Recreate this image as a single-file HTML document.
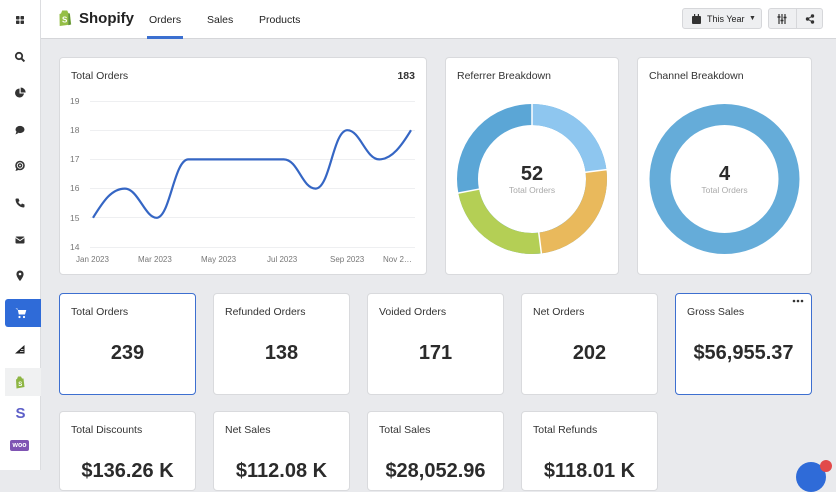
<!DOCTYPE html>
<html><head><meta charset="utf-8"><style>
*{margin:0;padding:0;box-sizing:border-box}
body{width:836px;height:470px;overflow:hidden;background:#e9eaed;font-family:"Liberation Sans",Arial,sans-serif;color:#333;position:relative}
.side{position:absolute;left:0;top:0;width:41px;height:470px;background:#fff;border-right:1px solid #dcdde0}
.top{position:absolute;left:41px;top:0;right:0;height:39px;background:#fff;border-bottom:1px solid #d5d6d9}
.ic{position:absolute;left:12px;width:16px;height:16px}
.card{position:absolute;background:#fff;border:1px solid #d9dadd;border-radius:4px}
.card.sel{border:1.5px solid #3d6fd0}
.lbl{position:absolute;left:11px;top:12px;font-size:10.5px;color:#333}
.val{position:absolute;left:0;right:0;top:48px;text-align:center;font-size:20px;font-weight:bold;color:#2b2b2b}
.t{position:absolute;font-size:10.5px}
.btn{position:absolute;top:8px;height:21px;background:#eeeff1;border:1px solid #d6d7da;border-radius:3px}
</style></head><body>
<div class="side">
 <svg class="ic" style="top:12px" viewBox="0 0 16 16"><rect x="4" y="4" width="3.5" height="3.5" rx=".7" fill="#333"/><rect x="8.5" y="4" width="3.5" height="3.5" rx=".7" fill="#333"/><rect x="4" y="8.5" width="3.5" height="3.5" rx=".7" fill="#333"/><rect x="8.5" y="8.5" width="3.5" height="3.5" rx=".7" fill="#333"/></svg>
 <svg class="ic" style="top:49px" viewBox="0 0 16 16"><circle cx="7" cy="7" r="3.2" fill="none" stroke="#333" stroke-width="1.8"/><path d="M9.4 9.4l3 3" stroke="#333" stroke-width="2"/></svg>
 <svg class="ic" style="top:85px" viewBox="0 0 16 16"><path d="M7.5 3.5a4.5 4.5 0 1 0 4.5 5H7.5z" fill="#333"/><path d="M8.7 2.5v5h5a5 5 0 0 0-5-5z" fill="#333"/></svg>
 <svg class="ic" style="top:122px" viewBox="0 0 16 16"><ellipse cx="8" cy="7.5" rx="4.5" ry="3.6" fill="#333"/><path d="M4.5 9.5l-1 3 3-1.5z" fill="#333"/></svg>
 <svg class="ic" style="top:158px" viewBox="0 0 16 16"><circle cx="8" cy="7.5" r="4" fill="none" stroke="#333" stroke-width="1.6"/><circle cx="8" cy="7.5" r="1.6" fill="none" stroke="#333" stroke-width="1.4"/><path d="M4.5 10l-1 3 3-1" fill="#333"/></svg>
 <svg class="ic" style="top:195px" viewBox="0 0 16 16"><path d="M4.5 3.5l2 0 1 2.5-1.3 1a6 6 0 0 0 2.8 2.8l1-1.3 2.5 1v2a1 1 0 0 1-1 1A8.5 8.5 0 0 1 3.5 4.5a1 1 0 0 1 1-1z" fill="#333"/></svg>
 <svg class="ic" style="top:232px" viewBox="0 0 16 16"><rect x="3.5" y="4.5" width="9" height="7" rx="1" fill="#333"/><path d="M3.5 5.5l4.5 3 4.5-3" stroke="#fff" stroke-width="1" fill="none"/></svg>
 <svg class="ic" style="top:268px" viewBox="0 0 16 16"><path d="M8 2.5a3.6 3.6 0 0 0-3.6 3.6c0 2.6 3.6 7 3.6 7s3.6-4.4 3.6-7A3.6 3.6 0 0 0 8 2.5z" fill="#333"/><circle cx="8" cy="6" r="1.3" fill="#fff"/></svg>
 <div style="position:absolute;left:5px;top:299px;width:36px;height:28px;background:#2f6bd8;border-radius:3px 0 0 3px"></div>
 <svg class="ic" style="top:305px;left:13px" viewBox="0 0 16 16"><path d="M2.5 3.5h2l1.3 6h6.2l1.3-4.5H5" fill="#fff"/><circle cx="6.5" cy="12" r="1.1" fill="#fff"/><circle cx="11" cy="12" r="1.1" fill="#fff"/></svg>
 <svg class="ic" style="top:341px" viewBox="0 0 16 16"><path d="M3 12.5L12.5 4v8.5z" fill="#222"/><path d="M8 10.5h3.5M9 8.5h2.5" stroke="#fff" stroke-width=".8"/></svg>
 <div style="position:absolute;left:5px;top:368px;width:36px;height:28px;background:#f0f1f2"></div>
 <svg class="ic" style="top:374px" viewBox="0 0 16 16"><path d="M4 5.5l1-.5 1-2.5h3l1 2 1.5 0 1 8.5-8 1.5z" fill="#8db543"/><text x="6.3" y="12" font-size="6" font-weight="bold" fill="#fff" font-family="Liberation Sans">S</text></svg>
 <div style="position:absolute;left:0;width:41px;top:405px;text-align:center;font-size:15px;font-weight:bold;color:#5d5fc8">S</div>
 <div style="position:absolute;left:10px;top:440px;width:19px;height:11px;background:#7f54b3;border-radius:2px;color:#fff;font-size:7px;font-weight:bold;text-align:center;line-height:11px">woo</div>
</div>
<div class="top">
 <svg style="position:absolute;left:17px;top:10px" width="14" height="16" viewBox="0 0 14 16"><path d="M1.5 4l1.5-.5 1.2-3h5l1.2 2.8 1.5.2 1.3 11-11.5 1.5z" fill="#95bf47"/><path d="M10.4 3.3l1.3.2 1.1 11-2.4.8z" fill="#5e8e3e"/><text x="4" y="12.5" font-size="8" font-weight="bold" fill="#fff" font-family="Liberation Sans">S</text></svg>
 <div class="t" style="left:38px;top:10px;font-size:15px;font-weight:bold;color:#222">Shopify</div>
 <div class="t" style="left:108px;top:14px;color:#222">Orders</div>
 <div style="position:absolute;left:106px;top:36px;width:36px;height:3px;background:#3b6fd0"></div>
 <div class="t" style="left:166px;top:14px;color:#222">Sales</div>
 <div class="t" style="left:218px;top:14px;color:#222">Products</div>
 <div class="btn" style="left:641px;width:80px"><svg style="position:absolute;left:9px;top:5px" width="9" height="10" viewBox="0 0 9 10"><rect x="0" y="2" width="9" height="8" rx="1" fill="#333"/><rect x="2" y="0" width="1.2" height="3" fill="#333"/><rect x="5.8" y="0" width="1.2" height="3" fill="#333"/></svg><span style="position:absolute;left:24px;top:5px;font-size:9px;color:#222">This Year</span><span style="position:absolute;left:66px;top:6px;font-size:7px;color:#333">▼</span></div>
 <div class="btn" style="left:727px;width:55px"><div style="position:absolute;left:27px;top:0;bottom:0;width:1px;background:#d6d7da"></div><svg style="position:absolute;left:8px;top:5px" width="10" height="10" viewBox="0 0 10 10"><path d="M2 0v10M5 0v10M8 0v10" stroke="#333" stroke-width="1.2"/><path d="M0.5 3h3M3.5 6.5h3M6.5 3.5h3" stroke="#333" stroke-width="1.5"/></svg><svg style="position:absolute;left:36px;top:5px" width="10" height="10" viewBox="0 0 10 10"><circle cx="2.5" cy="5" r="1.7" fill="#333"/><circle cx="7.5" cy="2" r="1.7" fill="#333"/><circle cx="7.5" cy="8" r="1.7" fill="#333"/><path d="M2.5 5L7.5 2M2.5 5l5 3" stroke="#333" stroke-width="1"/></svg></div>
</div>

<div class="card" style="left:59px;top:57px;width:368px;height:218px">
 <div class="lbl">Total Orders</div><div class="t" style="right:11px;top:12px;font-weight:bold;font-size:10.5px">183</div>
</div>
<div class="card" style="left:445px;top:57px;width:174px;height:218px"><div class="lbl">Referrer Breakdown</div></div>
<div class="card" style="left:637px;top:57px;width:175px;height:218px"><div class="lbl">Channel Breakdown</div></div>
<svg style="position:absolute;left:0;top:0" width="836" height="300" viewBox="0 0 836 300">
 <g stroke="#eeeff1" stroke-width="1"><path d="M90 101.5H415M90 130.5H415M90 159.5H415M90 188.5H415M90 217.5H415M90 247.5H415"/></g>
 <g font-family="Liberation Sans" font-size="8.5" fill="#777"><text x="70" y="104">19</text><text x="70" y="133">18</text><text x="70" y="162">17</text><text x="70" y="191">16</text><text x="70" y="221">15</text><text x="70" y="250">14</text>
 <g font-size="8"><text x="76" y="262">Jan 2023</text><text x="138" y="262">Mar 2023</text><text x="201" y="262">May 2023</text><text x="267" y="262">Jul 2023</text><text x="330" y="262">Sep 2023</text><text x="383" y="262">Nov 2…</text></g></g>
 <path d="M93 217.8C104 200 112 188.6 124.8 188.6C138 188.6 145 217.8 156.6 217.8C170 217.8 174 159.4 188.4 159.4L283.8 159.4C298 159.4 302 188.6 315.6 188.6C330 188.6 333 130.2 347.4 130.2C360 130.2 366 159.4 379.2 159.4C392 159.4 402 145 411 130.2" fill="none" stroke="#3566c4" stroke-width="2.2"/>
 <circle cx="532" cy="179" r="64.5" fill="none" stroke="#5ba6d6" stroke-width="21"/>
 <g fill="none" stroke-width="21" transform="rotate(-90 532 179)">
  <circle cx="532" cy="179" r="64.5" stroke="#8ec6ef" stroke-dasharray="93.2 420"/>
  <circle cx="532" cy="179" r="64.5" stroke="#e9b95c" stroke-dasharray="0 93.2 101.3 420"/>
  <circle cx="532" cy="179" r="64.5" stroke="#b4cf55" stroke-dasharray="0 194.5 97.3 420"/>
 </g>
 <g stroke="#fff" stroke-width="1.5">
  <path d="M532 103V126"/>
  <path d="M532 103V126" transform="rotate(82.8 532 179)"/>
  <path d="M532 103V126" transform="rotate(172.8 532 179)"/>
  <path d="M532 103V126" transform="rotate(259.2 532 179)"/>
 </g>
 <circle cx="724.5" cy="179" r="64.5" fill="none" stroke="#65acd9" stroke-width="21"/>
 <g font-family="Liberation Sans" text-anchor="middle"><text x="532" y="180" font-size="20" font-weight="bold" fill="#2b2b2b">52</text><text x="532" y="193" font-size="8.5" fill="#aaa">Total Orders</text>
 <text x="724.5" y="180" font-size="20" font-weight="bold" fill="#2b2b2b">4</text><text x="724.5" y="193" font-size="8.5" fill="#aaa">Total Orders</text></g>
</svg>

<div class="card sel" style="left:59px;top:293px;width:137px;height:102px"><div class="lbl">Total Orders</div><div class="val">239</div></div>
<div class="card" style="left:213px;top:293px;width:137px;height:102px"><div class="lbl">Refunded Orders</div><div class="val">138</div></div>
<div class="card" style="left:367px;top:293px;width:137px;height:102px"><div class="lbl">Voided Orders</div><div class="val">171</div></div>
<div class="card" style="left:521px;top:293px;width:137px;height:102px"><div class="lbl">Net Orders</div><div class="val">202</div></div>
<div class="card sel" style="left:675px;top:293px;width:137px;height:102px"><div class="lbl">Gross Sales</div><div class="val">$56,955.37</div><svg style="position:absolute;right:7px;top:5px" width="12" height="4"><circle cx="2" cy="2" r="1.3" fill="#333"/><circle cx="6" cy="2" r="1.3" fill="#333"/><circle cx="10" cy="2" r="1.3" fill="#333"/></svg></div>

<div class="card" style="left:59px;top:411px;width:137px;height:80px"><div class="lbl">Total Discounts</div><div class="val">$136.26 K</div></div>
<div class="card" style="left:213px;top:411px;width:137px;height:80px"><div class="lbl">Net Sales</div><div class="val">$112.08 K</div></div>
<div class="card" style="left:367px;top:411px;width:137px;height:80px"><div class="lbl">Total Sales</div><div class="val">$28,052.96</div></div>
<div class="card" style="left:521px;top:411px;width:137px;height:80px"><div class="lbl">Total Refunds</div><div class="val">$118.01 K</div></div>
<div style="position:absolute;left:796px;top:462px;width:30px;height:30px;border-radius:50%;background:#2f6bd8"></div>
<div style="position:absolute;left:820px;top:460px;width:12px;height:12px;border-radius:50%;background:#e24a4a"></div>
</body></html>
